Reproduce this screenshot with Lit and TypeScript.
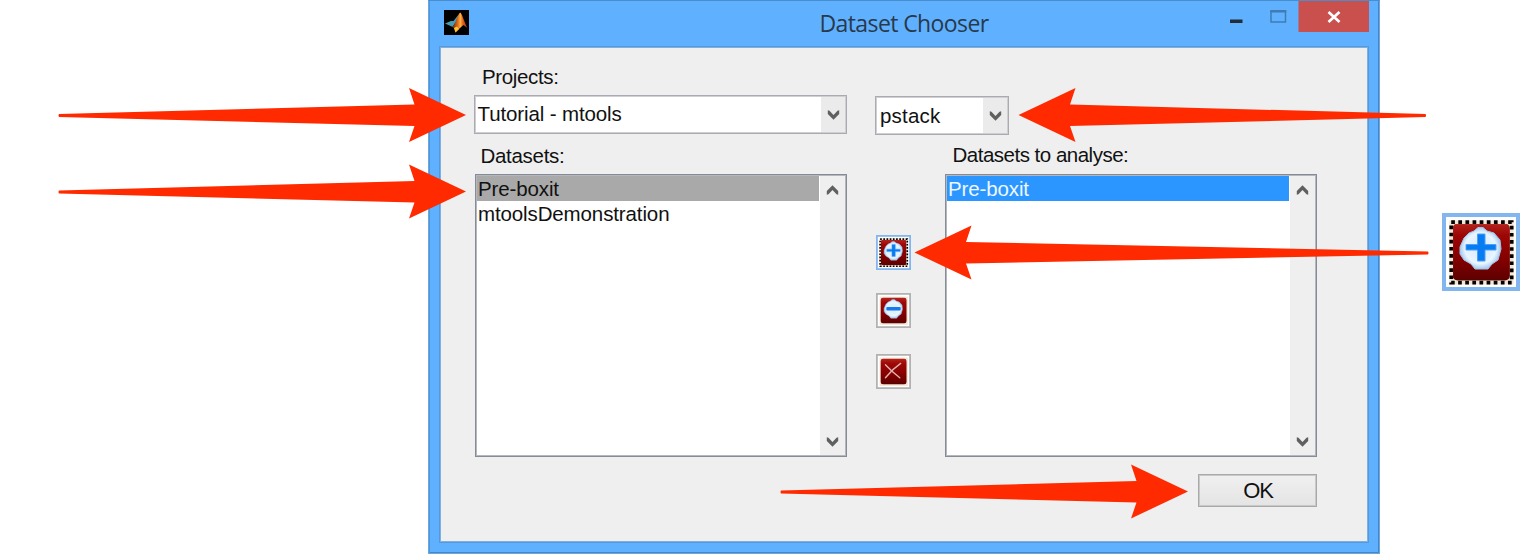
import { LitElement, html, css, svg, nothing } from "lit";
import { customElement, property } from "lit/decorators.js";

const chevron = (dir: "up" | "down") => html`<svg class="chev" width="13" height="10" viewBox="0 0 13 10">
  ${dir === "down"
    ? svg`<path d="M.8 .3L2.500 .8L6.5 5L10.500 .8L12.2 .3L12.2 4L6.5 9.8L.8 4Z" fill="#606060"/>`
    : svg`<path d="M.8 9.7L2.500 9.2L6.5 5L10.500 9.2L12.2 9.7L12.2 6L6.5 .2L.8 6Z" fill="#606060"/>`}
</svg>`;

@customElement("tile-icon")
export class TileIcon extends LitElement {
  @property() kind: "plus" | "minus" | "cross" = "plus";
  @property({ type: Boolean }) focused = false;

  static styles = css`
    :host { display: block; }
    svg { display: block; width: 100%; height: 100%; }
  `;

  render() {
    const glyph =
      this.kind === "cross"
        ? svg`<g fill="none" stroke="#e0b4b2" stroke-linecap="round">
            <path d="M21 24Q34 38 53 53" stroke-width="3"/>
            <path d="M55 21Q36 34 21 53" stroke-width="3"/></g>`
        : svg`<path d="M32 18L36 14.500H41L45 18L52 20L58 27L59 36L56 47L50 51L46 56H33L29 51L22 47L18 41V34L22 25L27 20Z" fill="url(#orb)" stroke="#9fc4ea" stroke-width="1" stroke-linejoin="round"/>
            ${this.kind === "plus"
              ? svg`<path d="M35.500 21H43v10.500H54V37H43v11h-7.500V37H24v-5.500h11.500Z" fill="#087cf2" stroke="#4fa0f4" stroke-width="1"/>`
              : svg`<rect x="23" y="31" width="32" height="8" rx="2" fill="#167be8"/>`}`;
    return html`<svg viewBox="0 0 78 78">
      <defs>
        <linearGradient id="red" x1="0" y1="0" x2="0" y2="1">
          <stop offset="0" stop-color="#b5221d"/><stop offset=".2" stop-color="#9d0705"/>
          <stop offset=".65" stop-color="#820000"/><stop offset="1" stop-color="#5c0000"/>
        </linearGradient>
        <radialGradient id="orb">
          <stop offset="0" stop-color="#d3eaff"/><stop offset=".75" stop-color="#eaf5ff"/>
          <stop offset="1" stop-color="#a5cdf2"/>
        </radialGradient>
      </defs>
      <rect width="78" height="78" fill=${this.focused ? "#83b5ee" : "#b2b2b2"}/>
      <rect x="4" y="4" width="70" height="70" fill="#fff"/>
      <rect x="8" y="8" width="63" height="63" fill="#f3e6d6"/>
      <rect x="10.500" y="10.500" width="57.500" height="57" rx="5" fill="url(#red)"/>
      ${glyph}
      ${this.focused
        ? svg`<rect x="9.200" y="9.200" width="60.500" height="60.500" fill="none" stroke="#f3e6d6" stroke-width="3.700"/>
            <rect x="9.200" y="9.200" width="60.500" height="60.500" fill="none" stroke="#050000" stroke-width="3.700" stroke-dasharray="3.700 3.420"/>`
        : nothing}
    </svg>`;
  }
}

@customElement("app-root")
export class AppRoot extends LitElement {
  static styles = css`
    :host { display: block; position: relative; width: 1520px; height: 554px; overflow: hidden;
      background: #fff; color: #111; font: 20.500px/24px "Liberation Sans", Arial, sans-serif; letter-spacing: -.12px; }
    * { box-sizing: border-box; }
    .page { display: flex; height: 554px; padding-left: 428px; }
    .window { width: 952px; height: 554px; background: #5fb1ff; border: 1px solid #6ba6de; border-top-color: #4a8dcc; box-shadow: inset 1px 0 #4f96dc, inset -1px -1px #4686c4;
      display: flex; flex-direction: column; padding: 0 10px 10px; }
    .titlebar { flex: none; height: 45px; display: grid; grid-template-columns: 1fr auto 1fr; }
    .logo { margin: 9px 0 0 5px; display: block; }
    .title { font: 23px/30px "Open Sans", "Noto Sans", sans-serif; padding-top: 7px; color: #29394b; letter-spacing: -.6px; white-space: nowrap; }
    .controls { display: flex; justify-content: flex-end; }
    .controls svg { display: block; }
    .panel { flex: 1; min-height: 0; background: #efefef; border: 1px solid #5599da; box-shadow: inset 0 0 0 1px #7fb0df; padding: 18px 51px 0 34px; }
    .label { white-space: nowrap; }
    .projects { padding-left: 8px; height: 24px; letter-spacing: -.35px; }
    .combos { display: flex; gap: 28px; align-items: flex-start; margin-top: 6px; }
    .combo { height: 39px; border: 1px solid #aaaab0; box-shadow: inset 0 0 0 1px #cfcfd3; background: #fff; padding: 1px; display: flex; justify-content: space-between; }
    .combo span { line-height: 33px; padding-left: 1.500px; }
    .combo.wide { width: 373px; }
    .combo.narrow { width: 134px; margin-top: 1px; letter-spacing: .2px; }
    .combo.narrow span { padding: 1px 0 0 3px; }
    .arrowbox { width: 24px; background: #ebebeb; display: flex; align-items: center; justify-content: center; }
    .chev { display: block; flex: none; }
    .labels { display: flex; margin-top: 8px; height: 31px; }
    .labels .first { width: 472px; padding: 1px 0 0 6.500px; letter-spacing: -.3px; }
    .labels .second { padding-left: 6.500px; letter-spacing: -.5px; }
    .lists { display: flex; margin-left: 1px; }
    .list { width: 372px; height: 283px; border: 1px solid #868c95; box-shadow: inset 0 0 0 1px #b4b8be; background: #fff; padding: 1px; display: flex; }
    .items { flex: 1; padding-right: 1px; }
    .item { height: 25px; line-height: 25px; padding-left: 1px; }
    .item.gray { background: #a9a9a9; }
    .item.blue { background: #2b96ff; color: #eef7ff; }
    .scroll { width: 25px; background: #efefef; display: flex; flex-direction: column; justify-content: space-between; align-items: center; padding: 9px 0 8px; }
    .tools { width: 98px; padding: 61px 0 0 29px; display: flex; flex-direction: column; }
    .tools tile-icon { width: 35px; height: 35px; margin-bottom: 23px; }
    .tools tile-icon:nth-child(2) { margin-bottom: 26px; }
    .footer { display: flex; justify-content: flex-end; margin-top: 17px; }
    .ok { width: 119px; height: 33px; padding: 0 0 0 1px; border: 1px solid #a9a9a9; box-shadow: inset 0 0 0 1px #c9c9c9; background: linear-gradient(#f0f0f0, #e4e4e4);
      font: 22px/31px "Liberation Sans", Arial, sans-serif; color: #111; letter-spacing: -1.200px; text-align: center; }
    .arrows { position: absolute; left: 0; top: 0; pointer-events: none; }
    .big { width: 78px; height: 78px; margin: 213px 0 0 62px; flex: none; }
  `;

  private combo(size: string, text: string) {
    return html`<div class="combo ${size}"><span>${text}</span><div class="arrowbox">${chevron("down")}</div></div>`;
  }

  private list(items: string[], tone: string) {
    return html`<div class="list">
      <div class="items">${items.map((t, i) => html`<div class="item ${i === 0 ? tone : ""}">${t}</div>`)}</div>
      <div class="scroll">${chevron("up")}${chevron("down")}</div>
    </div>`;
  }

  /* Arrow with its tip at (x, y); dir 1 points right, -1 points left. */
  private arrow(x: number, y: number, dir: number, length: number) {
    const px = (d: number) => x - dir * d;
    return svg`<path fill="#ff2a00" d="M${x} ${y}L${px(57)} ${y - 27}L${px(51.5)} ${y - 10.5}L${px(length - 1)} ${y - 1}
      Q${px(length)} ${y + 0.5} ${px(length - 1)} ${y + 2}L${px(51.5)} ${y + 11}L${px(57)} ${y + 27}Z"/>`;
  }

  render() {
    return html`
      <div class="page">
        <div class="window">
          <div class="titlebar">
            <svg class="logo" width="25" height="25" viewBox="0 0 25 25">
              <defs><linearGradient id="flame"><stop offset="0" stop-color="#6b1d0c"/><stop offset=".35" stop-color="#d9641a"/><stop offset=".55" stop-color="#ffb040"/><stop offset=".7" stop-color="#e2601a"/><stop offset="1" stop-color="#a52b12"/></linearGradient></defs>
              <rect width="25" height="25" fill="#000"/>
              <path d="M1 13.500L7 11L9.500 11L15 4L12 12L8.500 17L5.500 15.500Z" fill="#449db5"/>
              <path d="M16 2.500C18 3 20 12 23.500 18L19.500 15L16 18L11.500 22.500L10 18L8 17C12 14 13 6 16 2.500Z" fill="url(#flame)"/>
              <path d="M10 18L13 16.500L15 19L11.500 22.500Z" fill="#ffc52e"/>
            </svg>
            <div class="title">Dataset Chooser</div>
            <div class="controls">
              <svg width="139" height="32" viewBox="0 0 139 32">
                <rect x="0" y="18.500" width="12.500" height="3.500" fill="#232d36"/>
                <path d="M41 10h14.500v11H41Z" fill="none" stroke="#407cb4" stroke-width="1.500"/><path d="M40.300 10.300h16" stroke="#407cb4" stroke-width="2.500"/>
                <rect x="68.500" y="0" width="70.500" height="31" fill="#c9504c"/>
                <path d="M98.500 11L109.500 21M109.500 11L98.500 21" stroke="#fff" stroke-width="2.700"/>
              </svg>
            </div>
          </div>
          <div class="panel">
            <div class="label projects">Projects:</div>
            <div class="combos">${this.combo("wide", "Tutorial - mtools")}${this.combo("narrow", "pstack")}</div>
            <div class="labels"><div class="label first">Datasets:</div><div class="label second">Datasets to analyse:</div></div>
            <div class="lists">
              ${this.list(["Pre-boxit", "mtoolsDemonstration"], "gray")}
              <div class="tools">
                <tile-icon kind="plus" focused></tile-icon>
                <tile-icon kind="minus"></tile-icon>
                <tile-icon kind="cross"></tile-icon>
              </div>
              ${this.list(["Pre-boxit"], "blue")}
            </div>
            <div class="footer"><button class="ok">OK</button></div>
          </div>
        </div>
        <tile-icon class="big" kind="plus" focused></tile-icon>
      </div>
      <svg class="arrows" width="1520" height="554" viewBox="0 0 1520 554">
        ${this.arrow(466, 115, 1, 408)}
        ${this.arrow(466, 191.5, 1, 408)}
        ${this.arrow(1018.5, 115, -1, 408)}
        ${this.arrow(914.5, 252.5, -1, 514.5)}
        ${this.arrow(1188, 491.5, 1, 408)}
      </svg>`;
  }
}
